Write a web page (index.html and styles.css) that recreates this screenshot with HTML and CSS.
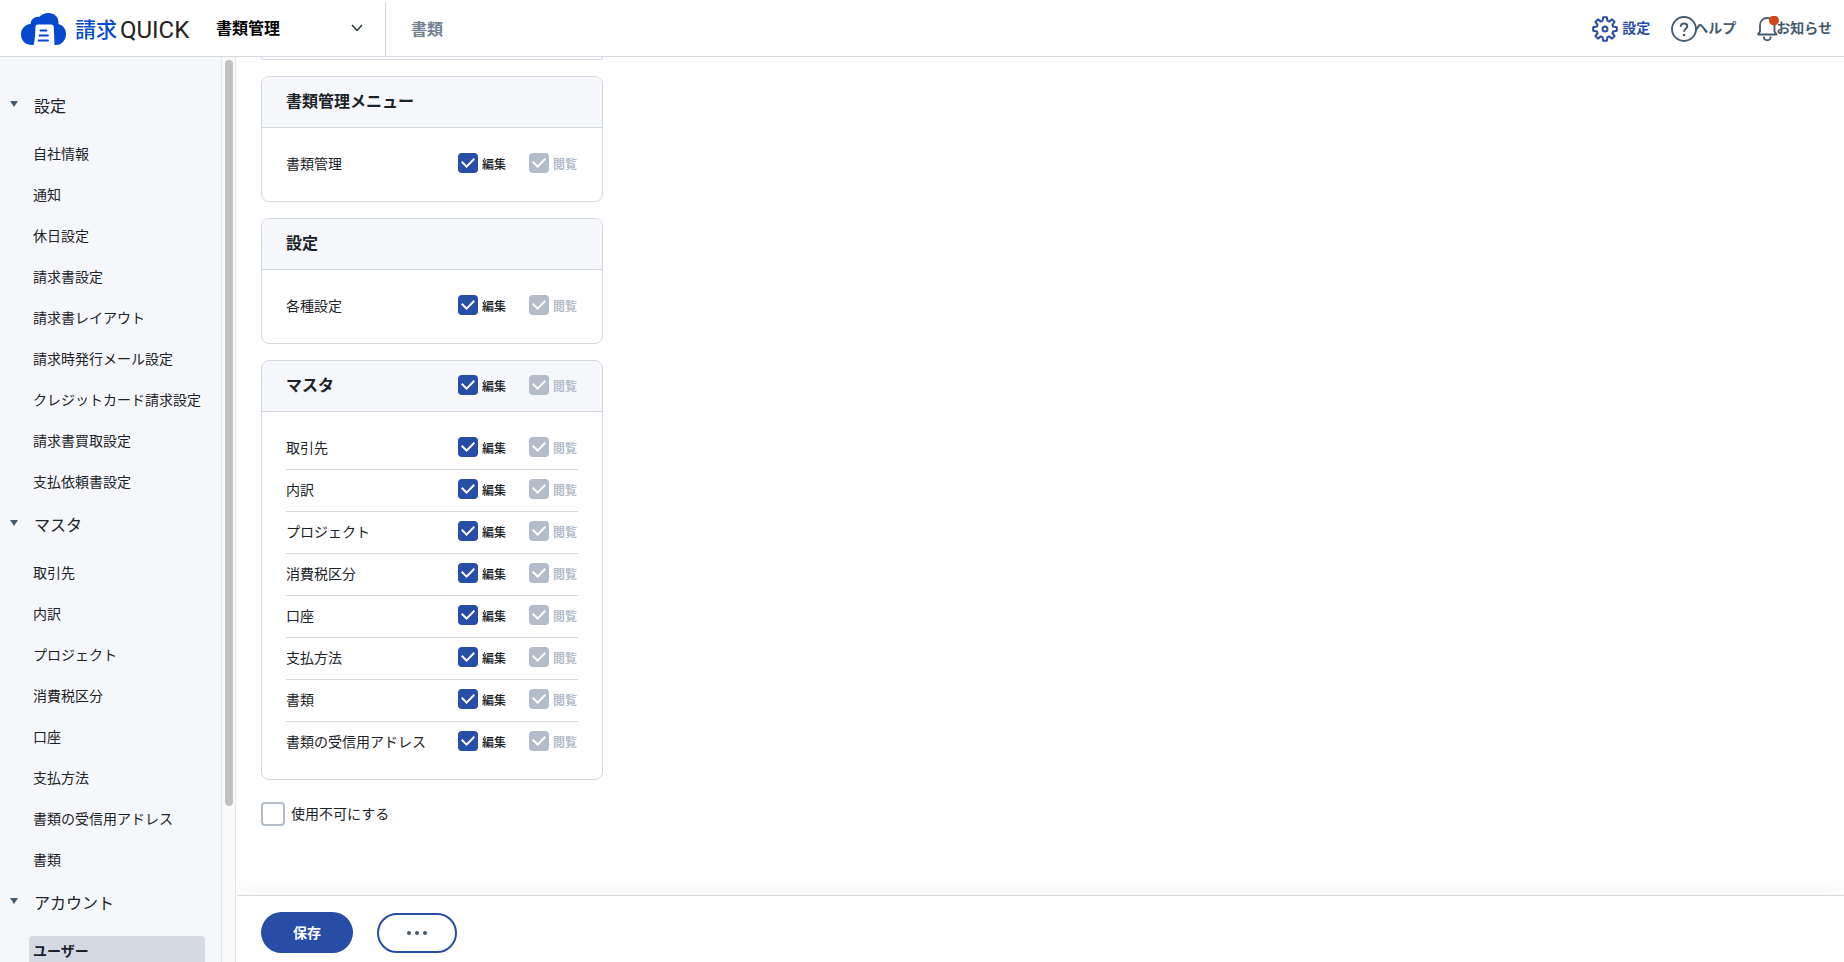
FILE: index.html
```html
<!DOCTYPE html>
<html lang="ja">
<head>
    <meta charset="UTF-8">
    <meta name="viewport" content="width=device-width, initial-scale=1.0">
    <title>請求QUICK</title>
    <link rel="stylesheet" href="styles.css">
</head>
<body>
    <header class="header">
        <a href="#" class="logo">
            <svg width="46" height="33" viewBox="0 0 46 33">
                <path fill="#0549cf" d="M11 32C5 32 0 28 0 21.500C0 15.500 4 11.500 9.500 11C10 6 14 3 18.500 3.800C20.500 1.500 24 0 27.500 0C33.500 0 37.500 4 37.500 9.500C37.500 10 37.500 10.500 37.300 11C42 12 45 16 45 21C45 27 41 32 35 32Z"/>
                <path fill="#fff" d="M14.500 13.500Q14.700 11.500 16.500 11.500H30.500Q32.800 11.500 32.800 14L33.500 32H12.500Q14 28 14.500 13.500Z"/>
                <path stroke="#0549cf" stroke-width="1.800" stroke-linecap="round" d="M19.500 17.500H25.500M18.500 22.500H27M17.500 27.500H27"/>
            </svg>
            <span class="logo-name">請求</span><span class="logo-quick">QUICK</span>
        </a>
        <div class="app-switch">
            <select aria-label="アプリ切替">
                <option>書類管理</option>
            </select>
            <svg class="chevron" width="12" height="8" viewBox="0 0 12 8">
                <path fill="none" stroke="#263238" stroke-width="1.500" d="M1 1L6 6.500L11 1"/>
            </svg>
        </div>
        <a href="#" class="header-tab">書類</a>
        <nav class="header-nav">
            <a href="#" class="nav-link active">
                <svg class="gear" width="26" height="26" viewBox="0 0 26 26" fill="none" stroke="#284da6" stroke-width="2" stroke-linejoin="round">
                    <path d="M10.500 4.900L11.200 1.200H14.800L15.500 4.900L17.100 5.600L20.100 3.400L22.600 5.900L20.400 8.900L21.100 10.500L24.800 11.200V14.800L21.100 15.500L20.400 17.100L22.600 20.100L20.100 22.600L17.100 20.400L15.500 21.100L14.800 24.800H11.200L10.500 21.100L8.900 20.400L5.900 22.600L3.400 20.100L5.600 17.100L4.900 15.500L1.200 14.800V11.200L4.900 10.500L5.600 8.900L3.400 5.900L5.900 3.400L8.900 5.600Z"/>
                    <circle cx="13" cy="13" r="2.500"/>
                </svg>
                <span>設定</span>
            </a>
            <a href="#" class="nav-link">
                <svg width="26" height="26" viewBox="0 0 26 26" fill="none" stroke="#465a6c">
                    <circle cx="13" cy="13" r="12" stroke-width="1.800"/>
                    <path stroke-width="2" d="M9.800 10.800C9.800 8.600 11 7.500 13.100 7.500C15.100 7.500 16.300 8.600 16.300 10.200C16.300 12.500 13.100 12.600 13.100 15.800"/>
                    <circle cx="13.100" cy="19" r="1.300" fill="#465a6c" stroke="none"/>
                </svg>
                <span>ヘルプ</span>
            </a>
            <a href="#" class="nav-link">
                <svg width="22" height="26" viewBox="0 0 22 26" fill="none" stroke="#465a6c" stroke-width="1.800">
                    <path stroke-linejoin="round" d="M1 18.500H19.500L17.500 15.500V9.500C17.500 5 14.500 2 10.200 2C6 2 3 5 3 9.500V15.500Z"/>
                    <path d="M6.800 20.500C7 25.500 13.500 25.500 13.700 20.500"/>
                    <circle cx="17" cy="4.500" r="5" fill="#d1481c" stroke="none"/>
                </svg>
                <span>お知らせ</span>
            </a>
        </nav>
    </header>

    <div class="page">
        <aside class="sidebar">
            <nav class="menu">
                <button type="button" class="menu-title">設定</button>
                <ul>
                    <li><a href="#">自社情報</a></li>
                    <li><a href="#">通知</a></li>
                    <li><a href="#">休日設定</a></li>
                    <li><a href="#">請求書設定</a></li>
                    <li><a href="#">請求書レイアウト</a></li>
                    <li><a href="#">請求時発行メール設定</a></li>
                    <li><a href="#">クレジットカード請求設定</a></li>
                    <li><a href="#">請求書買取設定</a></li>
                    <li><a href="#">支払依頼書設定</a></li>
                </ul>
                <button type="button" class="menu-title">マスタ</button>
                <ul>
                    <li><a href="#">取引先</a></li>
                    <li><a href="#">内訳</a></li>
                    <li><a href="#">プロジェクト</a></li>
                    <li><a href="#">消費税区分</a></li>
                    <li><a href="#">口座</a></li>
                    <li><a href="#">支払方法</a></li>
                    <li><a href="#">書類の受信用アドレス</a></li>
                    <li><a href="#">書類</a></li>
                </ul>
                <button type="button" class="menu-title">アカウント</button>
                <ul>
                    <li><a href="#" class="current">ユーザー</a></li>
                </ul>
            </nav>
            <div class="scrollbar"><div class="thumb"></div></div>
        </aside>

        <form class="main">
            <div class="content">
                <div class="card card-end"></div>

                <section class="card">
                    <div class="card-head"><h2>書類管理メニュー</h2></div>
                    <div class="card-body">
                        <div class="row">
                            <span class="row-name">書類管理</span>
                            <label class="check"><input type="checkbox" checked>編集</label>
                            <label class="check"><input type="checkbox" checked disabled>閲覧</label>
                        </div>
                    </div>
                </section>

                <section class="card">
                    <div class="card-head"><h2>設定</h2></div>
                    <div class="card-body">
                        <div class="row">
                            <span class="row-name">各種設定</span>
                            <label class="check"><input type="checkbox" checked>編集</label>
                            <label class="check"><input type="checkbox" checked disabled>閲覧</label>
                        </div>
                    </div>
                </section>

                <section class="card">
                    <div class="card-head">
                        <h2>マスタ</h2>
                        <label class="check"><input type="checkbox" checked>編集</label>
                        <label class="check"><input type="checkbox" checked disabled>閲覧</label>
                    </div>
                    <div class="card-body">
                        <div class="row">
                            <span class="row-name">取引先</span>
                            <label class="check"><input type="checkbox" checked>編集</label>
                            <label class="check"><input type="checkbox" checked disabled>閲覧</label>
                        </div>
                        <div class="row">
                            <span class="row-name">内訳</span>
                            <label class="check"><input type="checkbox" checked>編集</label>
                            <label class="check"><input type="checkbox" checked disabled>閲覧</label>
                        </div>
                        <div class="row">
                            <span class="row-name">プロジェクト</span>
                            <label class="check"><input type="checkbox" checked>編集</label>
                            <label class="check"><input type="checkbox" checked disabled>閲覧</label>
                        </div>
                        <div class="row">
                            <span class="row-name">消費税区分</span>
                            <label class="check"><input type="checkbox" checked>編集</label>
                            <label class="check"><input type="checkbox" checked disabled>閲覧</label>
                        </div>
                        <div class="row">
                            <span class="row-name">口座</span>
                            <label class="check"><input type="checkbox" checked>編集</label>
                            <label class="check"><input type="checkbox" checked disabled>閲覧</label>
                        </div>
                        <div class="row">
                            <span class="row-name">支払方法</span>
                            <label class="check"><input type="checkbox" checked>編集</label>
                            <label class="check"><input type="checkbox" checked disabled>閲覧</label>
                        </div>
                        <div class="row">
                            <span class="row-name">書類</span>
                            <label class="check"><input type="checkbox" checked>編集</label>
                            <label class="check"><input type="checkbox" checked disabled>閲覧</label>
                        </div>
                        <div class="row">
                            <span class="row-name">書類の受信用アドレス</span>
                            <label class="check"><input type="checkbox" checked>編集</label>
                            <label class="check"><input type="checkbox" checked disabled>閲覧</label>
                        </div>
                    </div>
                </section>

                <label class="disable-user"><input type="checkbox">使用不可にする</label>
            </div>

            <div class="footer">
                <button type="button" class="btn-save">保存</button>
                <button type="button" class="btn-more" aria-label="その他">
                    <svg width="20" height="4" viewBox="0 0 20 4" fill="#465a6c">
                        <circle cx="2" cy="2" r="2"/>
                        <circle cx="10" cy="2" r="2"/>
                        <circle cx="18" cy="2" r="2"/>
                    </svg>
                </button>
            </div>
        </form>
    </div>
</body>
</html>
```

FILE: styles.css
```css
* {
    box-sizing: border-box;
}

body {
    margin: 0;
    height: 100vh;
    display: flex;
    flex-direction: column;
    overflow: hidden;
    font-family: "Liberation Sans", "Noto Sans CJK JP", sans-serif;
    font-size: 14px;
    line-height: 20px;
    color: #1b2327;
    background-color: #fff;
}

a {
    color: inherit;
    text-decoration: none;
}

button, select {
    font-family: inherit;
    cursor: pointer;
}

/* Header */
.header {
    flex: none;
    display: flex;
    height: 57px;
    padding: 0 12px 0 21px;
    border-bottom: 1px solid #d5d9e2;
}

.logo {
    display: flex;
    align-items: center;
    padding-top: 3px;
    width: 191px;
    line-height: 24px;
}

.logo-name {
    margin-left: 8px;
    font-size: 21px;
    font-weight: 500;
    color: #0549cf;
}

.logo-quick {
    margin-left: 3px;
    font-family: Roboto, sans-serif;
    font-size: 24px;
    font-weight: 400;
    color: #222;
}

.app-switch {
    position: relative;
    width: 174px;
    margin-top: 2px;
    border-right: 1px solid #d5d9e2;
}

.app-switch select {
    appearance: none;
    width: 100%;
    height: 52px;
    padding: 0 40px 0 4px;
    border: none;
    background: none;
    font-size: 16px;
    font-weight: bold;
    color: #000;
}

.chevron {
    position: absolute;
    top: 22px;
    right: 22px;
    pointer-events: none;
}

.header-tab {
    padding: 20px 25px 0;
    font-size: 16px;
    font-weight: bold;
    color: #708090;
}

.header-nav {
    display: flex;
    gap: 21px;
    margin-left: auto;
    padding-bottom: 1px;
}

.nav-link {
    display: flex;
    align-items: center;
    font-weight: bold;
    color: #465a6c;
}

.nav-link svg {
    margin: 3px -3px 0 0;
}

.nav-link .gear {
    margin-right: 4px;
}

.nav-link.active {
    color: #284da6;
}

/* Layout */
.page {
    flex: 1;
    display: flex;
    min-height: 0;
}

.sidebar {
    flex: none;
    display: flex;
    width: 236px;
    background-color: #f6f7fb;
}

.menu {
    flex: 1;
    padding: 38px 16px 0 0;
    overflow: hidden;
}

.menu ul {
    display: grid;
    gap: 11px;
    margin: 0;
    padding: 20px 0 17px 29px;
    list-style: none;
}

.menu a {
    display: block;
    padding: 5px 0 5px 4px;
    border-radius: 4px;
    white-space: nowrap;
}

.menu .current {
    background-color: #d5d9e2;
    font-weight: bold;
}

.menu-title {
    display: flex;
    align-items: center;
    gap: 16px;
    padding: 0 0 0 10px;
    border: none;
    background: none;
    font-size: 16px;
    line-height: 24px;
    color: #1b2327;
}

.menu-title::before {
    content: "";
    margin-bottom: 6px;
    border: 4px solid transparent;
    border-top: 6px solid #465a6c;
    border-bottom: none;
}

.scrollbar {
    width: 15px;
    padding: 3px;
    border: 1px solid #e6e6e8;
    border-top: none;
    border-bottom: none;
    background-color: #fafafa;
}

.thumb {
    width: 8px;
    height: 83%;
    border-radius: 4px;
    background-color: #c1c1c1;
}

.main {
    flex: 1;
    display: flex;
    flex-direction: column;
    margin-left: 1px;
}

.content {
    flex: 1;
    min-height: 0;
    padding-left: 24px;
    overflow: hidden;
}

/* Cards */
.card {
    width: 342px;
    margin-bottom: 16px;
    border: 1px solid #d5d9e2;
    border-radius: 8px;
    overflow: hidden;
}

.card-end {
    height: 3px;
    border-top: none;
    border-radius: 0 0 8px 8px;
}

.card-head {
    display: flex;
    align-items: center;
    gap: 22px;
    height: 51px;
    padding: 0 24px 2px;
    border-bottom: 1px solid #d5d9e2;
    background-color: #f6f7fb;
}

.card-head h2 {
    flex: 1;
    margin: 0;
    padding-top: 2px;
    font-size: 16px;
    line-height: 20px;
}

.card-body {
    padding: 16px 24px;
}

.row {
    display: flex;
    align-items: center;
    gap: 22px;
    padding: 9px 0 12px;
    border-bottom: 1px solid #d5d9e2;
}

.row:last-child {
    border-bottom: none;
}

.row-name {
    flex: 1;
    height: 20px;
    line-height: 22px;
}

/* Checkboxes */
input[type="checkbox"] {
    appearance: none;
    flex: none;
    display: grid;
    place-items: center;
    width: 20px;
    height: 20px;
    margin: 0;
    border-radius: 4px;
}

.check {
    display: flex;
    gap: 4px;
    width: 49px;
    height: 20px;
    font-size: 12px;
    font-weight: 500;
    line-height: 24px;
    white-space: nowrap;
}

.check input {
    background-color: #284da6;
}

/* Check mark */
.check input::after {
    content: "";
    width: 14px;
    height: 10px;
    background-color: #fff;
    clip-path: polygon(0 45%, 10% 31%, 40% 72%, 90% 0, 100% 14%, 40% 100%);
}

.check:has(input:disabled) {
    font-weight: bold;
    color: #b3bdca;
}

.check input:disabled {
    background-color: #b3bdca;
}

.disable-user {
    display: flex;
    align-items: center;
    gap: 6px;
    width: fit-content;
    margin-top: 22px;
}

.disable-user input {
    width: 24px;
    height: 24px;
    border: 2px solid #b3bdca;
}

/* Footer */
.footer {
    display: flex;
    align-items: flex-end;
    gap: 24px;
    height: 67px;
    padding: 0 24px 9px;
    border-top: 1px solid #d5d9e2;
    background-color: #fff;
    box-shadow: 0 0 24px rgba(0, 0, 0, 0.06);
    clip-path: inset(-30px 0 0 0);
}

.btn-save {
    width: 92px;
    height: 41px;
    padding: 0 0 2px;
    border: none;
    border-radius: 21px;
    background-color: #284da6;
    font-size: 14px;
    font-weight: bold;
    color: #fff;
}

.btn-more {
    display: flex;
    align-items: center;
    justify-content: center;
    width: 80px;
    height: 40px;
    padding: 0;
    border: 2px solid #284da6;
    border-radius: 20px;
    background-color: #fff;
}
```
